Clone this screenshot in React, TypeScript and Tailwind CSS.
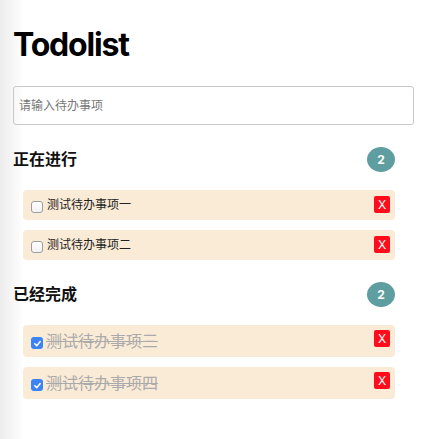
import React from "react";

const font = { fontFamily: 'Inter, "Noto Sans CJK SC", sans-serif' };

function Header({ title, count }: { title: string; count: number }) {
  return (
    <div className="mr-[19px] flex h-[25px] items-center justify-between">
      <h2 className="text-[16px] font-bold leading-[25px] text-[#111]">{title}</h2>
      <span className="flex h-[25px] w-[28px] items-center justify-center rounded-[50%] bg-[#5f9ea0] text-[12px] font-bold text-white">
        {count}
      </span>
    </div>
  );
}

function Check({ done }: { done?: boolean }) {
  return done ? (
    <span className="mt-[4px] flex h-[12px] w-[12px] shrink-0 items-center justify-center rounded-[3px] bg-[#3c83f6]">
      <svg width="9" height="9" viewBox="0 0 10 10" fill="none">
        <path d="M2 5.3 L4.2 7.4 L8 2.8" stroke="#fff" strokeWidth="1.7" strokeLinecap="round" strokeLinejoin="round" />
      </svg>
    </span>
  ) : (
    <span className="mt-[4px] block h-[12px] w-[12px] shrink-0 rounded-[3px] border border-[#9d9d9d] bg-[linear-gradient(#ffffff,#f2f2f2)]" />
  );
}

function Row({ text, done }: { text: string; done?: boolean }) {
  return (
    <li
      className={
        "flex rounded-[4px] bg-[#faebd7] pl-[8px] pr-[5px] " +
        (done ? "h-[32px]" : "h-[30px]")
      }
    >
      <div className="flex flex-1 items-center">
        <Check done={done} />
        {done ? (
          <span className="ml-[3px] text-[16px] leading-[20px] text-[#aaa] line-through">{text}</span>
        ) : (
          <span className="ml-[4px] text-[12px] leading-[18px] text-[#222]">{text}</span>
        )}
      </div>
      <button
        className={
          "flex h-[17px] w-[16px] items-center justify-center rounded-[2px] bg-[#ff0d1d] text-[12px] leading-none text-white " +
          (done ? "mt-[5px]" : "mt-[6px]")
        }
      >
        X
      </button>
    </li>
  );
}

export default function App() {
  return (
    <div
      className="min-h-screen bg-[linear-gradient(to_right,#ececec,#fff_24px)] pl-[13px] pr-[7px]"
      style={font}
    >
      <h1 className="pt-[29px] text-[32px] font-bold leading-[32px] tracking-[-1.2px] text-black">Todolist</h1>
      <input
        className="mt-[25px] block h-[39px] w-full rounded-[3px] border border-[#c8c8c8] px-[5px] text-[12px] placeholder:text-[#777] outline-none"
        placeholder="请输入待办事项"
      />
      <div className="mt-[22px]">
        <Header title="正在进行" count={2} />
        <ul className="ml-[10px] mr-[19px] mt-[18px] flex flex-col gap-[10px]">
          <Row text="测试待办事项一" />
          <Row text="测试待办事项二" />
        </ul>
      </div>
      <div className="mt-[22px]">
        <Header title="已经完成" count={2} />
        <ul className="ml-[10px] mr-[19px] mt-[18px] flex flex-col gap-[10px]">
          <Row text="测试待办事项三" done />
          <Row text="测试待办事项四" done />
        </ul>
      </div>
    </div>
  );
}
